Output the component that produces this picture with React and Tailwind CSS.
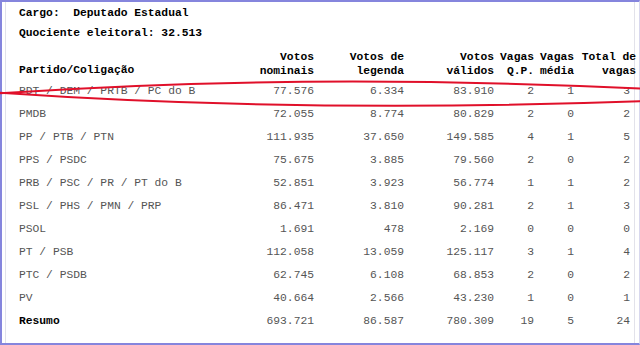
import React from 'react';

const rows = [
  ['PDT / DEM / PRTB / PC do B', '77.576', '6.334', '83.910', '2', '1', '3'],
  ['PMDB', '72.055', '8.774', '80.829', '2', '0', '2'],
  ['PP / PTB / PTN', '111.935', '37.650', '149.585', '4', '1', '5'],
  ['PPS / PSDC', '75.675', '3.885', '79.560', '2', '0', '2'],
  ['PRB / PSC / PR / PT do B', '52.851', '3.923', '56.774', '1', '1', '2'],
  ['PSL / PHS / PMN / PRP', '86.471', '3.810', '90.281', '2', '1', '3'],
  ['PSOL', '1.691', '478', '2.169', '0', '0', '0'],
  ['PT / PSB', '112.058', '13.059', '125.117', '3', '1', '4'],
  ['PTC / PSDB', '62.745', '6.108', '68.853', '2', '0', '2'],
  ['PV', '40.664', '2.566', '43.230', '1', '0', '1'],
];

const grid = 'grid grid-cols-[210px_85px_90px_90px_40px_40px_62px]';

const Row = ({ cells, bold }) => (
  <div className={`${grid} h-[23px] items-center text-[#555]`}>
    <div className={bold ? 'font-bold text-black' : ''}>{cells[0]}</div>
    {cells.slice(1).map((c, i) => (
      <div key={i} className={`text-right ${i === 5 ? 'pr-[6px]' : ''}`}>{c}</div>
    ))}
  </div>
);

export default function App() {
  return (
    <div className="relative w-[640px] h-[345px] overflow-hidden bg-white font-['Liberation_Mono','Courier_New',monospace] text-[11.3px] leading-[14px]">
      <div className="h-full border-t-2 border-l-2 border-b-2 border-r border-[#8585dd] border-r-[#d8d8ee]">
        <div className="h-full ml-[3px] mr-[4px] border-l border-r border-[#e2e2ea] pl-[13px] pt-[4px]">
          <div className="font-bold text-black">
            <div className="h-[20px]">Cargo:&nbsp;&nbsp;Deputado Estadual</div>
            <div className="h-[20px]">Quociente eleitoral: 32.513</div>
          </div>
          <div className={`${grid} items-end font-bold text-black mt-[4px] pb-[1px]`}>
            <div className="pb-[1px]">Partido/Coligação</div>
            <div className="text-right">Votos<br />nominais</div>
            <div className="text-right">Votos de<br />legenda</div>
            <div className="text-right">Votos<br />válidos</div>
            <div className="text-right">Vagas<br />Q.P.</div>
            <div className="text-right">Vagas<br />média</div>
            <div className="text-right whitespace-nowrap">Total de<br />vagas</div>
          </div>
          <div>
            {rows.map(r => <Row key={r[0]} cells={r} />)}
            <Row cells={['Resumo', '693.721', '86.587', '780.309', '19', '5', '24']} bold />
          </div>
        </div>
      </div>
      <svg className="absolute inset-0" width="640" height="345" viewBox="0 0 640 345" fill="none">
        <path d="M -10 94 Q 300 72 650 89" stroke="#e0102a" strokeWidth="2" />
        <path d="M -10 92 Q 300 114 650 101" stroke="#e0102a" strokeWidth="2" />
      </svg>
    </div>
  );
}
